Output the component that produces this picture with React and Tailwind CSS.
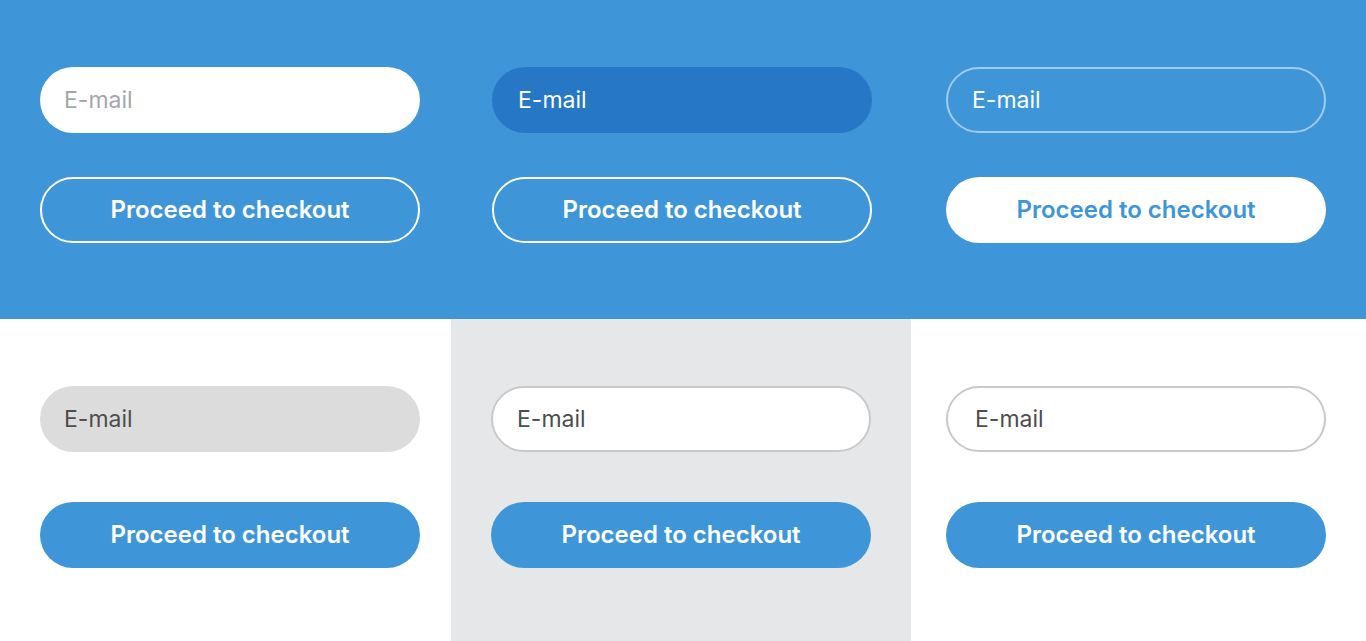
import React from 'react';

const font = { fontFamily: 'Inter, "Noto Sans", sans-serif' };

function Field({ className }) {
  return (
    <input
      type="email"
      placeholder="E-mail"
      className={`w-[380px] h-[66px] rounded-full pl-6 text-[23px] outline-none ${className}`}
    />
  );
}

function Checkout({ className }) {
  return (
    <button
      type="button"
      className={`w-[380px] h-[66px] rounded-full text-[24px] font-semibold flex items-center justify-center ${className}`}
    >
      Proceed to checkout
    </button>
  );
}

export default function App() {
  return (
    <div className="w-[1366px] h-[641px] overflow-hidden flex flex-col" style={font}>
      {/* Blue row */}
      <div className="h-[319px] bg-[#3e96d8] flex">
        <div className="w-[452px] pl-10 pt-[67px] flex flex-col gap-[44px]">
          <Field className="bg-white placeholder:text-[#a3a7ab]" />
          <Checkout className="border-2 border-white text-white" />
        </div>
        <div className="w-[454px] pl-10 pt-[67px] flex flex-col gap-[44px]">
          <Field className="bg-[#2677c6] pl-[26px] placeholder:text-white" />
          <Checkout className="border-2 border-white text-white" />
        </div>
        <div className="flex-1 pl-10 pt-[67px] flex flex-col gap-[44px]">
          <Field className="border-2 border-white/50 bg-transparent placeholder:text-white" />
          <Checkout className="bg-white text-[#3e96d8]" />
        </div>
      </div>

      {/* Light row */}
      <div className="flex-1 flex">
        <div className="w-[451px] bg-white pl-10 pt-[67px] flex flex-col gap-[50px]">
          <Field className="bg-[#dcdcdc] placeholder:text-[#4d4d4d]" />
          <Checkout className="bg-[#3e96d8] text-white" />
        </div>
        <div className="w-[460px] bg-[#e6e7e9] pl-10 pt-[67px] flex flex-col gap-[50px]">
          <Field className="bg-white border-2 border-[#c9c9c9] placeholder:text-[#4d4d4d]" />
          <Checkout className="bg-[#3e96d8] text-white" />
        </div>
        <div className="flex-1 bg-white pl-[35px] pt-[67px] flex flex-col gap-[50px]">
          <Field className="bg-white border-2 border-[#c9c9c9] pl-[27px] placeholder:text-[#4d4d4d]" />
          <Checkout className="bg-[#3e96d8] text-white" />
        </div>
      </div>
    </div>
  );
}
